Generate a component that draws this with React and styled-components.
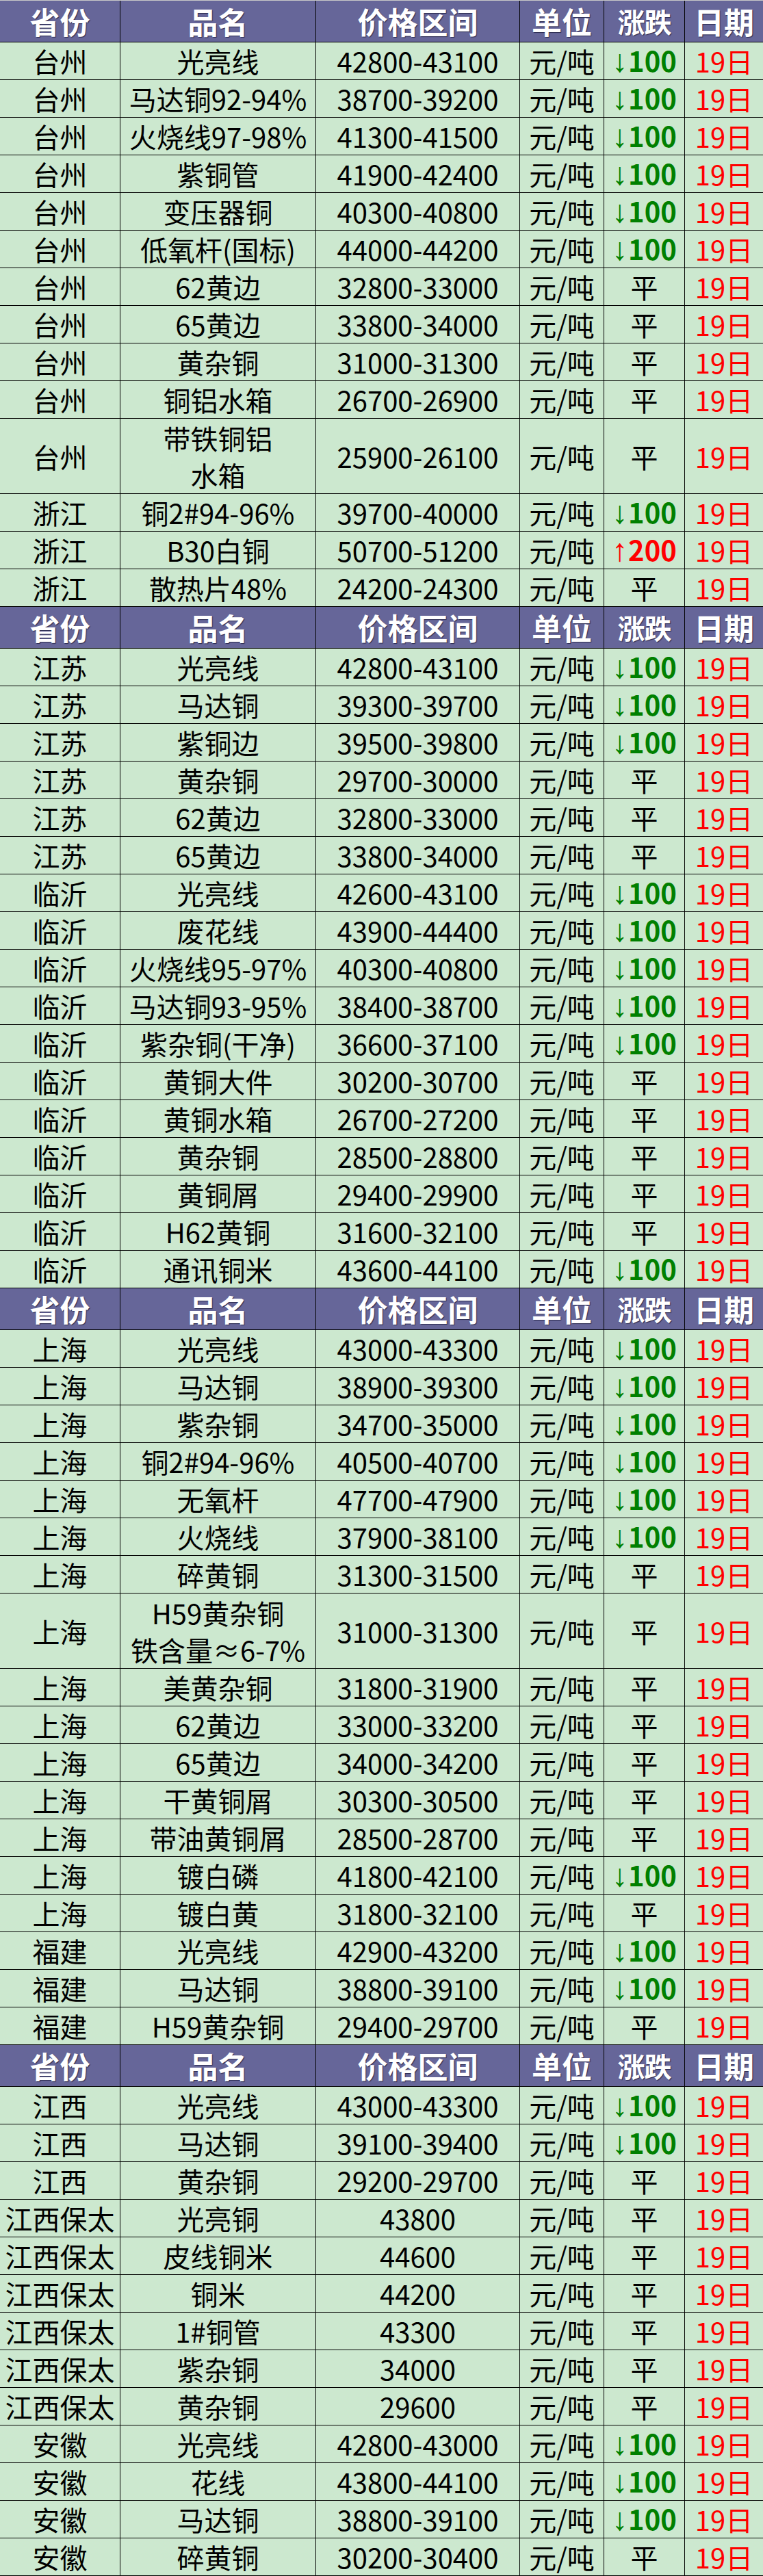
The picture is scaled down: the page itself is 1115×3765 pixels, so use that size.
import React from 'react';
import styled, { createGlobalStyle } from 'styled-components';

const GREEN_BG = '#cce8cf';

const GlobalStyle = createGlobalStyle`
  html, body {
    margin: 0;
    padding: 0;
    background: ${GREEN_BG};
  }
  body {
    font-family: "Noto Sans CJK SC", "Noto Sans", sans-serif;
  }
`;

const Sheet = styled.div`
  display: flex;
  flex-direction: column;
  gap: 1px;
  width: 1115px;
  background: #000;
  border-top: 1px solid #c9c9c9;
  border-bottom: 1px solid #000;
`;

const Row = styled.div`
  display: grid;
  grid-template-columns: 175px 285px 297px 122px 117px 1fr;
  grid-template-rows: minmax(0, 1fr);
  column-gap: 1px;
  height: ${(p) => (p.$head ? 60 : p.$tall ? 109 : 54)}px;
`;

const HeadCell = styled.div`
  display: flex;
  align-items: center;
  justify-content: center;
  min-height: 0;
  background: #666699;
  color: #fff;
  font-weight: 700;
  font-size: ${(p) => p.$size || 44}px;
  line-height: 1.2;
  letter-spacing: ${(p) => (p.$size ? '-1px' : '0')};
  text-shadow: 1px 1px 1px rgba(20, 20, 50, 0.7);
  white-space: nowrap;
`;

const Cell = styled.div`
  display: flex;
  align-items: center;
  justify-content: center;
  min-height: 0;
  text-align: center;
  background: ${GREEN_BG};
  color: ${(p) => p.$color || '#000'};
  font-size: 40px;
  line-height: ${(p) => (p.$tall ? '54px' : '1.25')};
  white-space: pre-line;
`;

const Amount = styled.span`
  font-weight: 700;
  line-height: 1;
  color: ${(p) => (p.$up ? '#ff0000' : '#008000')};
  white-space: nowrap;
`;

const Arrow = styled.span`
  font-family: "Liberation Sans", "DejaVu Sans", sans-serif;
  font-weight: 400;
  font-size: 46px;
  line-height: 1;
  margin-right: 1px;
`;

const HEAD = ['省份', '品名', '价格区间', '单位', '涨跌', '日期'];

const SECTIONS = [
  [
    ['台州', '光亮线', '42800-43100', -100],
    ['台州', '马达铜92-94%', '38700-39200', -100],
    ['台州', '火烧线97-98%', '41300-41500', -100],
    ['台州', '紫铜管', '41900-42400', -100],
    ['台州', '变压器铜', '40300-40800', -100],
    ['台州', '低氧杆(国标)', '44000-44200', -100],
    ['台州', '62黄边', '32800-33000', 0],
    ['台州', '65黄边', '33800-34000', 0],
    ['台州', '黄杂铜', '31000-31300', 0],
    ['台州', '铜铝水箱', '26700-26900', 0],
    ['台州', '带铁铜铝\n水箱', '25900-26100', 0],
    ['浙江', '铜2#94-96%', '39700-40000', -100],
    ['浙江', 'B30白铜', '50700-51200', 200],
    ['浙江', '散热片48%', '24200-24300', 0],
  ],
  [
    ['江苏', '光亮线', '42800-43100', -100],
    ['江苏', '马达铜', '39300-39700', -100],
    ['江苏', '紫铜边', '39500-39800', -100],
    ['江苏', '黄杂铜', '29700-30000', 0],
    ['江苏', '62黄边', '32800-33000', 0],
    ['江苏', '65黄边', '33800-34000', 0],
    ['临沂', '光亮线', '42600-43100', -100],
    ['临沂', '废花线', '43900-44400', -100],
    ['临沂', '火烧线95-97%', '40300-40800', -100],
    ['临沂', '马达铜93-95%', '38400-38700', -100],
    ['临沂', '紫杂铜(干净)', '36600-37100', -100],
    ['临沂', '黄铜大件', '30200-30700', 0],
    ['临沂', '黄铜水箱', '26700-27200', 0],
    ['临沂', '黄杂铜', '28500-28800', 0],
    ['临沂', '黄铜屑', '29400-29900', 0],
    ['临沂', 'H62黄铜', '31600-32100', 0],
    ['临沂', '通讯铜米', '43600-44100', -100],
  ],
  [
    ['上海', '光亮线', '43000-43300', -100],
    ['上海', '马达铜', '38900-39300', -100],
    ['上海', '紫杂铜', '34700-35000', -100],
    ['上海', '铜2#94-96%', '40500-40700', -100],
    ['上海', '无氧杆', '47700-47900', -100],
    ['上海', '火烧线', '37900-38100', -100],
    ['上海', '碎黄铜', '31300-31500', 0],
    ['上海', 'H59黄杂铜\n铁含量≈6-7%', '31000-31300', 0],
    ['上海', '美黄杂铜', '31800-31900', 0],
    ['上海', '62黄边', '33000-33200', 0],
    ['上海', '65黄边', '34000-34200', 0],
    ['上海', '干黄铜屑', '30300-30500', 0],
    ['上海', '带油黄铜屑', '28500-28700', 0],
    ['上海', '镀白磷', '41800-42100', -100],
    ['上海', '镀白黄', '31800-32100', 0],
    ['福建', '光亮线', '42900-43200', -100],
    ['福建', '马达铜', '38800-39100', -100],
    ['福建', 'H59黄杂铜', '29400-29700', 0],
  ],
  [
    ['江西', '光亮线', '43000-43300', -100],
    ['江西', '马达铜', '39100-39400', -100],
    ['江西', '黄杂铜', '29200-29700', 0],
    ['江西保太', '光亮铜', '43800', 0],
    ['江西保太', '皮线铜米', '44600', 0],
    ['江西保太', '铜米', '44200', 0],
    ['江西保太', '1#铜管', '43300', 0],
    ['江西保太', '紫杂铜', '34000', 0],
    ['江西保太', '黄杂铜', '29600', 0],
    ['安徽', '光亮线', '42800-43000', -100],
    ['安徽', '花线', '43800-44100', -100],
    ['安徽', '马达铜', '38800-39100', -100],
    ['安徽', '碎黄铜', '30200-30400', 0],
  ],
];

const HeaderRow = () => (
  <Row $head>
    {HEAD.map((h) => (
      <HeadCell key={h} $size={h === '涨跌' ? 40 : undefined}>{h}</HeadCell>
    ))}
  </Row>
);

const ChangeCell = ({ value }) => {
  if (!value) return <Cell>平</Cell>;
  const up = value > 0;
  return (
    <Cell>
      <Amount $up={up}>
        <Arrow>{up ? '↑' : '↓'}</Arrow>
        {Math.abs(value)}
      </Amount>
    </Cell>
  );
};

const PriceRow = ({ item }) => {
  const [prov, name, price, change] = item;
  const tall = name.includes('\n');
  return (
    <Row $tall={tall}>
      <Cell>{prov}</Cell>
      <Cell $tall={tall}>{name}</Cell>
      <Cell>{price}</Cell>
      <Cell>元/吨</Cell>
      <ChangeCell value={change} />
      <Cell $color="#ff0000">19日</Cell>
    </Row>
  );
};

export default function App() {
  return (
    <>
      <GlobalStyle />
      <Sheet>
        {SECTIONS.map((rows, i) => (
          <React.Fragment key={i}>
            <HeaderRow />
            {rows.map((item, j) => (
              <PriceRow key={j} item={item} />
            ))}
          </React.Fragment>
        ))}
      </Sheet>
    </>
  );
}
